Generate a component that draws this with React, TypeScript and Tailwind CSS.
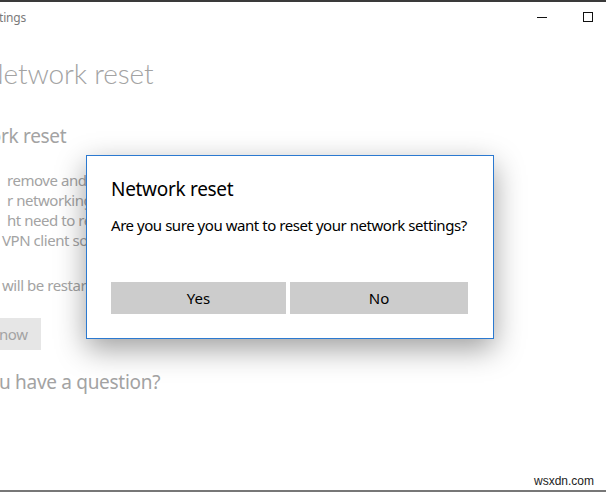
import React from "react";

export default function App() {
  return (
    <div className="relative w-[606px] h-[493px] overflow-hidden bg-white font-['Noto_Sans',sans-serif]">
      <div className="h-[2px] bg-[#3a3a3a]" />
      {/* title bar */}
      <div className="h-[32px] flex items-center justify-between">
        <span className="text-[12px] text-[#7a7a7a] -ml-[1px] leading-none tracking-[-0.2px]">tings</span>
        <div className="flex items-center h-full">
          <div className="w-[10px] h-[1px] bg-[#111] mr-[36px] -mt-[2px]" />
          <div className="w-[10px] h-[10px] border border-[#111] mr-[13px] -mt-[2px]" />
        </div>
      </div>

      {/* page content (scrolled off to the left) */}
      <div className="flex flex-col text-[#a3a3a3] whitespace-nowrap">
        <div className="mt-[21px] h-[36px] leading-[36px] text-[28px] font-light font-['Lato',sans-serif] tracking-[-0.15px] -ml-[17px]">Network reset</div>
        <div className="mt-[31px] h-[28px] leading-[28px] text-[19px] tracking-[-0.3px] -ml-[56px]">Network reset</div>
        <div className="mt-[20px] flex flex-col text-[15px] leading-[20px] tracking-[-0.45px]">
          <span className="pl-[7px]">remove and then reinstall all your network adapters,</span>
          <span className="pl-[7px]">r networking components back to their original</span>
          <span className="pl-[7px]">ht need to reinstall other networking software</span>
          <span className="pl-[2px]">VPN client software or proxy switches.</span>
        </div>
        <div className="mt-[25px] h-[20px] leading-[20px] text-[15px] tracking-[-0.45px] pl-[2px]">will be restarted.</div>
        <div className="mt-[23px] w-[41px] h-[32px] bg-[#e6e6e6] flex items-center text-[15px] tracking-[-0.45px]">
          <span className="-ml-[1px]">now</span>
        </div>
        <div className="mt-[18px] h-[28px] leading-[28px] text-[19px] tracking-[-0.3px] -ml-[1px]">u have a question?</div>
      </div>

      {/* dialog */}
      <div className="absolute left-[86px] top-[155px] w-[408px] h-[184px] bg-white border border-[#2b79d0] shadow-[0_10px_28px_rgba(0,0,0,0.38)] flex flex-col px-[24px]">
        <div className="mt-[19px] h-[28px] leading-[28px] text-[19px] tracking-[-0.3px] text-black">Network reset</div>
        <div className="mt-[12px] h-[20px] leading-[20px] text-[15px] tracking-[-0.45px] text-black whitespace-nowrap">
          Are you sure you want to reset your network settings?
        </div>
        <div className="mt-[47px] flex gap-[4px]">
          <div className="w-[175px] h-[32px] bg-[#cccccc] flex items-center justify-center text-[15px] text-black">Yes</div>
          <div className="w-[178px] h-[32px] bg-[#cccccc] flex items-center justify-center text-[15px] text-black">No</div>
        </div>
      </div>

      {/* watermark */}
      <div className="absolute right-[12px] bottom-[6px] text-[12px] text-[#222] font-['Liberation_Sans',sans-serif] leading-none">
        wsxdn.com
      </div>
      <div className="absolute left-0 right-0 bottom-[1px] h-[2px] bg-[#777]" />
    </div>
  );
}
